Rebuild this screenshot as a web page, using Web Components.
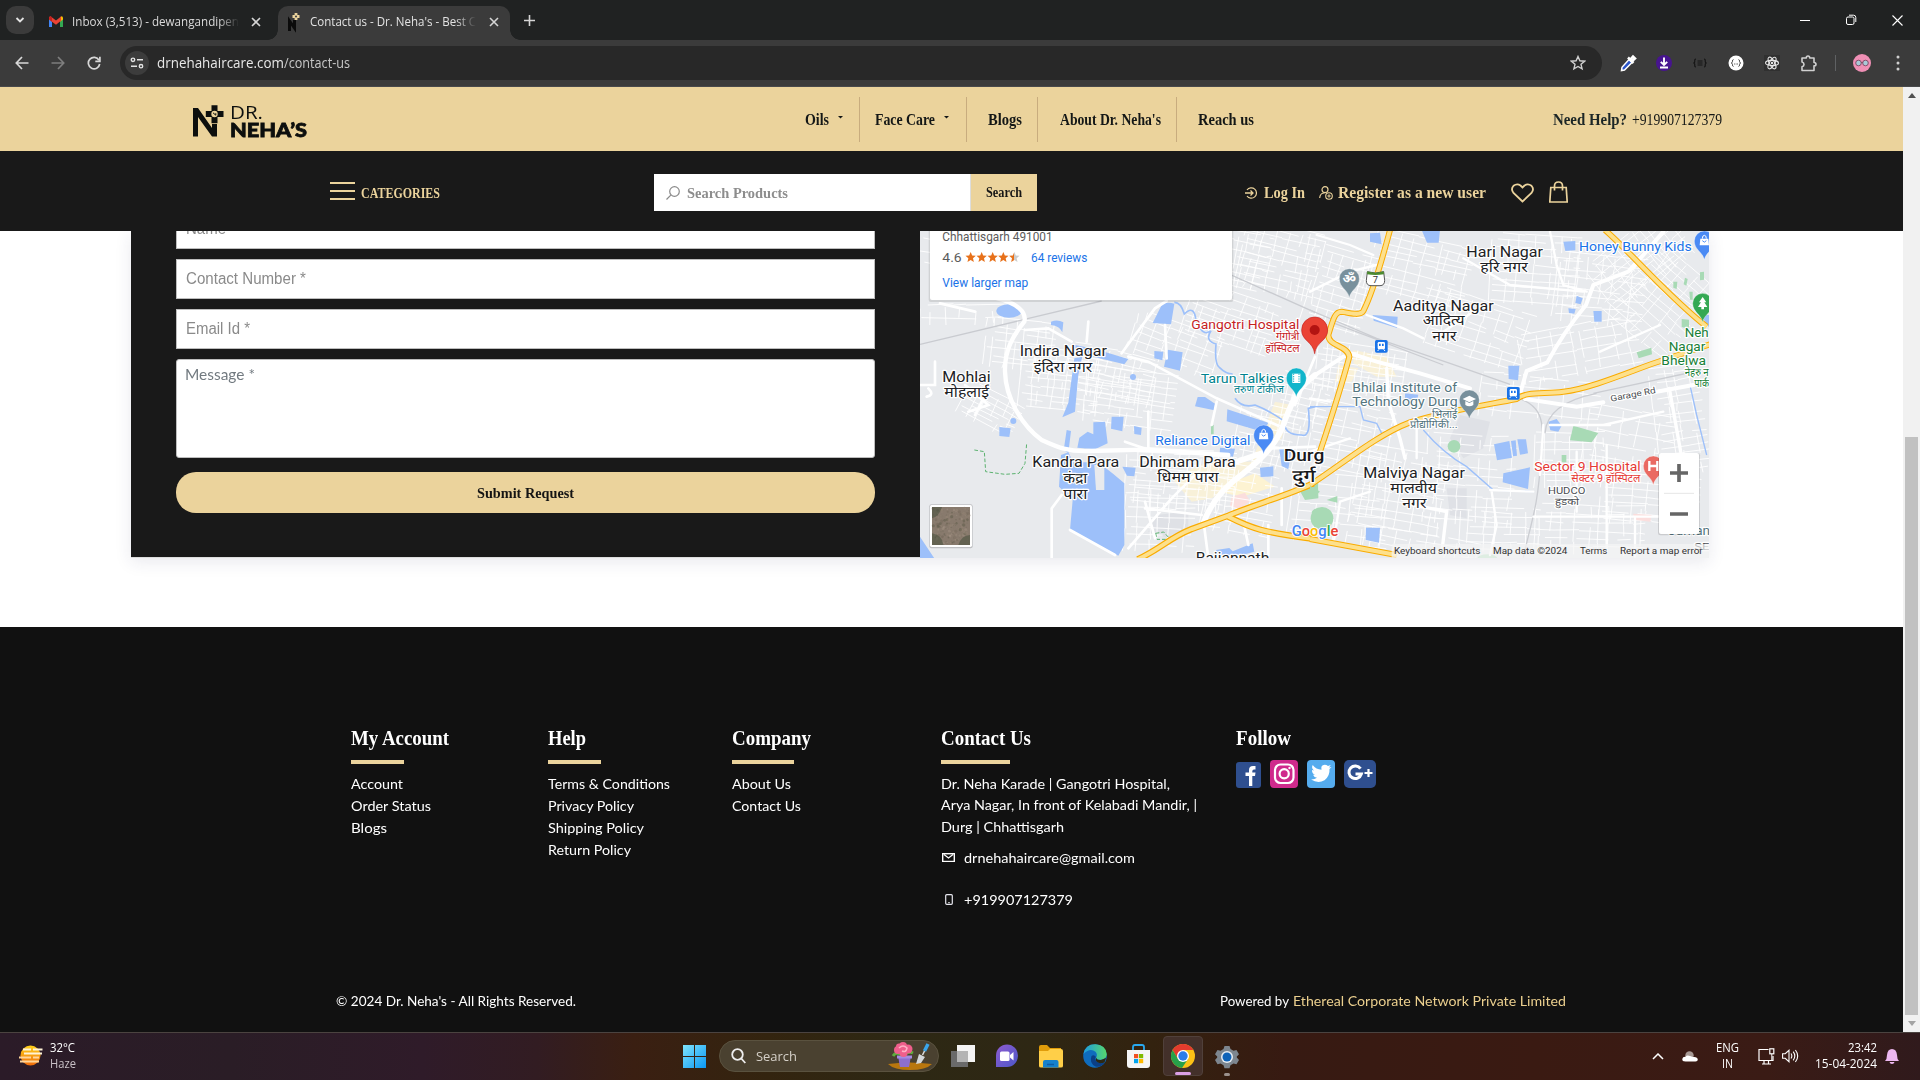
<!DOCTYPE html>
<html lang="en">
<head>
<meta charset="utf-8">
<title>Contact us - Dr. Neha's</title>
<style>
html,body{margin:0;padding:0;height:1080px;overflow:hidden;background:#fff}
</style>
</head>
<body>
<desktop-screen></desktop-screen>
<script>
const SANS = '"Open Sans","Noto Sans",sans-serif';
const SERIF = '"Liberation Serif",serif';
const LATO = 'Lato,"Open Sans",sans-serif';

function define(name, html, init) {
  customElements.define(name, class extends HTMLElement {
    constructor() {
      super();
      this.attachShadow({ mode: 'open' });
    }
    connectedCallback() {
      if (this.ready) return;
      this.ready = true;
      const t = document.createElement('template');
      t.innerHTML = typeof html === 'function' ? html(this) : html;
      this.shadowRoot.append(document.importNode(t.content, true));
      if (init) init(this);
    }
  });
}
const svg = (w, h, body, extra = '') => `<svg width="${w}" height="${h}" viewBox="0 0 ${w} ${h}" fill="none" ${extra}>${body}</svg>`;

/* A single line of text condensed or widened to a set width; m = space before it */
define('fit-text', el => `<style>
:host{display:block;flex:none;width:${el.getAttribute('w')}px;margin-left:${el.getAttribute('m') || 0}px;white-space:nowrap}
span{display:inline-block;transform-origin:0 50%}</style><span><slot></slot></span>`, el => {
  const s = el.shadowRoot.querySelector('span');
  const n = s.getBoundingClientRect().width;
  if (n) s.style.transform = `scaleX(${el.getAttribute('w') / n})`;
});

/* Fixed cell that centres an icon */
define('icon-cell', el => `<style>:host{display:flex;flex:none;align-items:center;justify-content:center;width:${el.getAttribute('w')}px;margin-left:${el.getAttribute('m') || 0}px}</style><slot></slot>`);

const closeX = svg(10, 10, '<path d="M1 1l8 8M9 1L1 9" stroke="#d5d5d5" stroke-width="1.6"/>');

define('browser-tabs', `<style>
:host{display:flex;height:40px;background:#202222;font:12px/20px ${SANS};color:#e3e3e3;align-items:center}
svg{display:block}
.menu{width:28px;height:28px;margin-left:6px;border-radius:10px;background:#3b3b3b;display:flex;align-items:center;justify-content:center}
.tab{display:flex;align-items:center;height:34px;align-self:flex-end;padding-bottom:2px;box-sizing:border-box}
.idle{width:229px;margin-left:15px;color:#dadada}
.active{width:232px;background:#3b3b3b;border-radius:10px 10px 0 0;margin-left:0;position:relative}
.active::before,.active::after{content:"";position:absolute;bottom:0;width:10px;height:10px}
.active::before{left:-10px;background:radial-gradient(circle at 0 0,transparent 9.5px,#3b3b3b 10px)}
.active::after{right:-10px;background:radial-gradient(circle at 100% 0,transparent 9.5px,#3b3b3b 10px)}
.fade{-webkit-mask:linear-gradient(90deg,#000 88%,transparent)}
.win{margin-left:auto;display:flex}
</style>
<div class="menu">${svg(10, 8, '<path d="M1.5 2l3.5 3.5L8.500 2" stroke="#e3e3e3" stroke-width="1.8"/>')}</div>
<div class="tab idle">
${svg(14, 12, '<path d="M0 1.500V11h3V5.500z" fill="#4285f4"/><path d="M14 1.500V11h-3V5.500z" fill="#34a853"/><path d="M11 5.700V1.300L12.500.2Q14 .3 14 2v1.500z" fill="#fbbc04"/><path d="M0 3.500V2Q0 .3 1.500.2L7 4.500 12 .6v4.200L7 8.800z" fill="#ea4335"/><path d="M0 3.500V2Q.3 0 2 .5l1 .8v4.400z" fill="#c5221f"/>', 'style="margin:0 9px 1px 0"')}
<fit-text class="fade" w="167">Inbox (3,513) - dewangandipen</fit-text>
<icon-cell w="10" m="12">${closeX}</icon-cell></div>
<div class="tab active">
${svg(16, 22, '<path d="M2.500 20V10l5 7V9" stroke="#0b0b0b" stroke-width="3"/><path d="M9 2v7M5.500 5.500h7" stroke="#ebd39c" stroke-width="2.800"/><circle cx="9" cy="5.500" r="1.100" fill="#444"/>', 'style="margin:0 6px 0 9px"')}
<fit-text class="fade" w="166" m="1">Contact us - Dr. Neha's - Best C</fit-text>
<icon-cell w="10" m="13">${closeX}</icon-cell></div>
<icon-cell w="12" m="13">${svg(11, 11, '<path d="M5.500 0v11M0 5.500h11" stroke="#d5d5d5" stroke-width="1.600"/>')}</icon-cell>
<div class="win">
<icon-cell w="46">${svg(10, 10, '<path d="M0 5.500h10" stroke="#fff"/>')}</icon-cell>
<icon-cell w="46">${svg(12, 12, '<rect x="1.500" y="3" width="7.500" height="7.500" rx="1.500" stroke="#fff"/><path d="M4 1.200h4.500q2.300 0 2.300 2.300V8" stroke="#fff"/>')}</icon-cell>
<icon-cell w="46">${svg(11, 11, '<path d="M.5.5l10 10M10.500.5l-10 10" stroke="#fff" stroke-width="1.100"/>')}</icon-cell>
</div>`);

define('browser-toolbar', `<style>
:host{display:flex;align-items:center;height:46px;background:#3b3b3b;border-bottom:1px solid #48494b;font:14px/20px ${SANS};color:#e8e8e8}
svg{display:block}
.omni{display:flex;align-items:center;width:1482px;height:34px;margin-left:11px;border-radius:17px;background:#282828}
.site{width:24px;height:24px;border-radius:50%;background:#3c3c3c;display:flex;align-items:center;justify-content:center;margin-left:5px}
.path{color:#c7c7c7}
.star{margin-left:auto;margin-right:16px}
.sep{width:1px;height:16px;background:#5f6163;margin:0 9px}
</style>
<icon-cell w="36" m="4">${svg(14, 14, '<path d="M13.500 7H1.500M7 1L1.300 7 7 13" stroke="#d8d8d8" stroke-width="1.700"/>')}</icon-cell>
<icon-cell w="36">${svg(14, 14, '<path d="M.5 7h12M7 1l5.700 6L7 13" stroke="#7e7e7e" stroke-width="1.700"/>')}</icon-cell>
<icon-cell w="33" m="1">${svg(14, 14, '<path d="M12 4.200A5.700 5.700 0 1 0 12.700 8" stroke="#d8d8d8" stroke-width="1.700"/><path d="M12.900.7v4.600H8.300" stroke="#d8d8d8" stroke-width="1.700"/>')}</icon-cell>
<div class="omni" style="margin-left:10px"><div class="site">${svg(14, 12, '<circle cx="3" cy="2.800" r="1.700" stroke="#e3e3e3" stroke-width="1.400"/><path d="M7 2.800h6M1 9.200h6" stroke="#e3e3e3" stroke-width="1.600"/><circle cx="11" cy="9.200" r="1.700" stroke="#e3e3e3" stroke-width="1.400"/>')}</div>
<fit-text w="127" m="8">drnehahaircare.com</fit-text><fit-text class="path" w="66">/contact-us</fit-text>
<div class="star">${svg(16, 16, '<path d="M8 1.500l1.900 4.300 4.700.4-3.600 3.100 1.100 4.600L8 11.500l-4.100 2.400L5 9.300 1.400 6.200l4.700-.4z" stroke="#d0d0d0" stroke-width="1.400"/>')}</div></div>
<icon-cell w="36" m="8">${svg(18, 18, '<path d="M10 5.500l3 3L5.500 16l-3 .5.500-3.200z" fill="#2b55c9" stroke="#fff" stroke-width="1.500"/><path d="M9 3.500l5.500 5.500M10.500 6.500l3.500-4 2 2-4 3.500" stroke="#fff" stroke-width="2.500"/>')}</icon-cell>
<icon-cell w="36">${svg(16, 16, '<circle cx="8" cy="8" r="8" fill="#47148f"/><path d="M8 2.500v6M4.800 6.800L8 10l3.200-3.200M4 12.500h8" stroke="#fff" stroke-width="1.900"/>')}</icon-cell>
<icon-cell w="36">${svg(14, 10, '<path d="M3 1Q1.500 1 1.800 3 2 4.700.5 5 2 5.300 1.800 7 1.500 9 3 9M11 1q1.500 0 1.200 2-.2 1.700 1.300 2-1.500.3-1.300 2Q12.500 9 11 9M4.500 3h5M4.500 5h5M4.500 7h5" stroke="#141414" stroke-width="1.200"/>')}</icon-cell>
<icon-cell w="36">${svg(16, 16, '<circle cx="8" cy="8" r="7.500" fill="#fff"/><path d="M5.500 4.500Q4.300 4.700 4.500 6.300 4.500 7.700 3.300 8q1.200.3 1.200 1.700-.2 1.600 1 1.800M10.500 4.500q1.200.2 1 1.800 0 1.400 1.200 1.700-1.200.3-1.200 1.700.200 1.600-1 1.800M6.200 9h.8M7.700 9h.8M9.200 9h.8" stroke="#333" stroke-width=".9"/>')}</icon-cell>
<icon-cell w="36">${svg(16, 16, '<rect width="16" height="16" fill="#303030"/><g stroke="#e6e6e6" stroke-width="1.100"><ellipse cx="8" cy="8" rx="6.500" ry="2.600"/><ellipse cx="8" cy="8" rx="6.500" ry="2.600" transform="rotate(60 8 8)"/><ellipse cx="8" cy="8" rx="6.500" ry="2.600" transform="rotate(120 8 8)"/></g><circle cx="8" cy="8" r="1.200" fill="#e6e6e6"/>')}</icon-cell>
<icon-cell w="36">${svg(17, 17, '<path d="M2 3h4.300q0-2 1.700-2t1.700 2H14v4.500q2 0 2 1.700t-2 1.700V15.500H2v-3.800q2-.5 2-2.300T2 7z" stroke="#d0d0d0" stroke-width="1.600" stroke-linejoin="round"/>')}</icon-cell>
<div class="sep"></div>
<icon-cell w="18" m="8">${svg(18, 18, '<circle cx="9" cy="9" r="9" fill="#ef8fb5"/><circle cx="5.500" cy="9" r="2.800" fill="#a9c9d8" stroke="#84506a"/><circle cx="12.500" cy="9" r="2.800" fill="#a9c9d8" stroke="#84506a"/><path d="M8 8.500h2" stroke="#84506a"/>')}</icon-cell>
<icon-cell w="4" m="25">${svg(4, 16, '<g fill="#d0d0d0"><circle cx="2" cy="2" r="1.500"/><circle cx="2" cy="8" r="1.500"/><circle cx="2" cy="14" r="1.500"/></g>')}</icon-cell>`);

define('brand-logo', `<style>
:host{display:flex;align-items:center;color:#0d0f0e;font-family:Lato,sans-serif}
svg{display:block}
.w{margin-left:6px;width:77px}
.a{font:400 19px/17px "Open Sans",sans-serif}
.b{font:900 19.500px/17px Lato,sans-serif;-webkit-text-stroke:.8px #0d0f0e}
</style>
${svg(31, 33, '<path d="M0 3h5l14 20v-4h5v12.500h-5L5 12v19.500H0z" fill="#0d0f0e"/><path d="M21.500.3v17.900M12.800 9h17.700" stroke="#0d0f0e" stroke-width="6"/><circle cx="21.500" cy="9" r="3.200" fill="#ebd39c"/><path d="M20 7.800l2.800 2.400v-2" stroke="#0d0f0e"/>')}
<div class="w"><fit-text class="a" w="33">DR.</fit-text><fit-text class="b" w="77">NEHA’S</fit-text></div>`);

define('site-header', `<style>
:host{display:flex;align-items:center;height:64px;background:#ebd39c;font:bold 16px/20px ${SERIF};color:#141716}
svg{display:block}
brand-logo{margin-left:193px;margin-top:4px}
nav{display:flex;align-items:center;margin-left:498px}
nav fit-text{padding-top:2px}
i{display:block;width:1px;height:45px;background:#c8ac7e}
.h{font-size:17px;color:#1c2626}.p{font-weight:400;font-size:16px}
.nh{display:flex;align-items:center;margin-left:299px;padding-top:1px}
</style>
<brand-logo></brand-logo>
<nav><fit-text w="24">Oils</fit-text><icon-cell w="6" m="8">${svg(5, 3, '<path d="M0 0h5L2.500 2.500z" fill="#141716"/>', 'style="margin-top:-3px"')}</icon-cell><i style="margin-left:16px"></i>
<fit-text w="60" m="15">Face Care</fit-text><icon-cell w="6" m="8">${svg(5, 3, '<path d="M0 0h5L2.500 2.500z" fill="#141716"/>', 'style="margin-top:-3px"')}</icon-cell><i style="margin-left:17px"></i>
<fit-text w="34" m="21">Blogs</fit-text><i style="margin-left:15px"></i>
<fit-text w="101" m="22">About Dr. Neha's</fit-text><i style="margin-left:15px"></i>
<fit-text w="56" m="21">Reach us</fit-text></nav>
<div class="nh"><fit-text class="h" w="74">Need Help?</fit-text><fit-text class="p" w="90" m="5">+919907127379</fit-text></div>`);

define('site-bar', `<style>
:host{display:flex;align-items:center;height:80px;background:#191919;font:bold 17px/20px ${SERIF};color:#ebd39c;padding-top:3px;box-sizing:border-box}
svg{display:block}
.c{font-size:15px;padding-top:1px}
.s{display:flex;width:383px;height:37px;margin-left:214px;margin-top:0}
.in{display:flex;align-items:center;width:317px;background:#fff;color:#8d8d8d;font-size:15px;border-right:1px solid #ddd;box-sizing:border-box}
.go{display:flex;align-items:center;justify-content:center;width:66px;background:#ebd39c;color:#161616;font-size:14px}
</style>
<icon-cell w="25" m="330">${svg(25, 18, '<path d="M0 1h25M0 9h25M0 17h25" stroke="#ebd39c" stroke-width="2"/>', 'style="margin-top:-3px"')}</icon-cell>
<fit-text class="c" w="79" m="6">CATEGORIES</fit-text>
<div class="s"><div class="in"><icon-cell w="14" m="12">${svg(14, 14, '<circle cx="8.500" cy="5.500" r="4.800" stroke="#8a8a8a" stroke-width="1.200"/><path d="M4.800 9.200L.5 13.500" stroke="#8a8a8a" stroke-width="1.200"/>')}</icon-cell><fit-text w="101" m="7">Search Products</fit-text></div><div class="go"><fit-text w="36">Search</fit-text></div></div>
<icon-cell w="12" m="208">${svg(12, 12, '<path d="M2 3a5.200 5.200 0 1 1 0 6" stroke="#ebd39c" stroke-width="1.200"/><path d="M0 6h8M5.500 3.500L8 6 5.500 8.500" stroke="#ebd39c" stroke-width="1.300"/>')}</icon-cell>
<fit-text w="41" m="7">Log In</fit-text>
<icon-cell w="14" m="14">${svg(14, 14, '<circle cx="6" cy="3.700" r="3" stroke="#ebd39c" stroke-width="1.200"/><path d="M.7 12Q1 7 5.500 7" stroke="#ebd39c" stroke-width="1.200"/><circle cx="10" cy="10" r="3.300" stroke="#ebd39c" stroke-width="1.100"/><path d="M10 8.300v3.400M8.300 10h3.400" stroke="#ebd39c"/>')}</icon-cell>
<fit-text w="148" m="5">Register as a new user</fit-text>
<icon-cell w="23" m="25">${svg(23, 20, '<path d="M11.500 18.500L2.500 10Q-.5 6 2.500 2.800 6 .2 9.500 2.500L11.500 4.500 13.500 2.500Q17 .2 20.500 2.800 23.500 6 20.500 10z" stroke="#ebd39c" stroke-width="1.800"/>')}</icon-cell>
<icon-cell w="19" m="15">${svg(19, 22, '<path d="M1.800 6.500h15.400l1 14.500H.8z" stroke="#ebd39c" stroke-width="1.700"/><path d="M5.500 9.500V5q0-4 4-4t4 4v4.500" stroke="#ebd39c" stroke-width="1.700"/>', 'style="margin-top:-2px"')}</icon-cell>`);

define('form-field', `<style>
:host{display:flex;box-sizing:border-box;height:40px;border:1px solid #bdbdbd;background:#fff;align-items:center;padding-left:9px;font:16px/20px "Liberation Sans",sans-serif;color:#8a8a8a}
:host([area]){height:99px;border-radius:3px;align-items:flex-start;padding:4px 0 0 8px;font:16px/20px ${LATO};color:#727a80}
</style><slot></slot>`);

define('contact-form', `<style>
:host{display:block;box-sizing:border-box;width:789px;height:326px;background:#191919;padding:0 45px;overflow:hidden}
.f{display:flex;flex-direction:column;gap:10px;margin-top:-22px}
.go{display:flex;align-items:center;justify-content:center;height:41px;border-radius:20px;background:#ebd39c;color:#141414;font:bold 15px/20px ${SERIF};margin-top:4px}
</style><div class="f">
<form-field><fit-text w="40">Name</fit-text></form-field>
<form-field><fit-text w="120">Contact Number *</fit-text></form-field>
<form-field><fit-text w="64">Email Id *</fit-text></form-field>
<form-field area><fit-text w="70">Message *</fit-text></form-field>
<div class="go"><fit-text w="97">Submit Request</fit-text></div></div>`);

/* ---------- map ---------- */
function seeded(s) { return () => (s = (s * 16807) % 2147483647) / 2147483647; }
function streets() {
  const r = seeded(4211);
  const zones = [ // cx, cy, half width, half height, angle, spacing (px of the map)
    [1215, 255, 55, 28, 12, 8], [1280, 260, 40, 35, 14, 7], [1110, 262, 60, 12, 5, 14],
    [965, 315, 45, 10, 0, 12], [1020, 345, 35, 25, 6, 8], [1060, 380, 40, 30, 6, 7], [1110, 375, 45, 25, 12, 8],
    [1130, 400, 45, 30, 8, 8], [1175, 345, 45, 22, 20, 9], [1230, 320, 45, 28, 18, 8], [990, 410, 30, 18, 28, 7],
    [1180, 480, 55, 30, 4, 8], [1160, 520, 35, 32, 2, 9], [1240, 500, 35, 35, 10, 9], [1270, 440, 35, 28, 12, 8],
    [1300, 400, 28, 25, 14, 8], [1340, 290, 30, 40, 16, 8], [1360, 370, 45, 25, 8, 7], [1420, 270, 50, 32, 14, 9],
    [1480, 330, 50, 30, 18, 10], [1535, 270, 45, 35, 4, 9], [1600, 290, 45, 35, 6, 10], [1580, 350, 60, 25, -10, 11],
    [1660, 300, 40, 45, 40, 9], [1640, 260, 50, 28, -38, 8], [1350, 440, 40, 35, 12, 9], [1400, 490, 45, 40, 10, 10],
    [1340, 510, 50, 35, 6, 10], [1470, 480, 45, 45, 4, 12], [1500, 530, 40, 22, 2, 9], [1590, 530, 55, 25, 2, 9],
    [1570, 460, 35, 28, 0, 9], [1630, 440, 45, 30, 10, 12], [1680, 420, 25, 55, -8, 10], [1650, 500, 50, 25, 4, 11],
    [1420, 545, 60, 12, 10, 9], [1540, 400, 60, 22, 6, 16], [940, 255, 25, 14, 10, 13]];
  let d = '';
  for (const [cx, cy, w, h, a, s] of zones) {
    const c = Math.cos(a * Math.PI / 180), n = Math.sin(a * Math.PI / 180);
    const P = (x, y) => (cx + x * c - y * n).toFixed(1) + ' ' + (cy + x * n + y * c).toFixed(1);
    for (let y = -h; y < h; y += s * (.6 + r() * .6)) {
      let x = -w + r() * 12;
      while (x < w - 4) { const e = Math.min(w, x + 12 + r() * 45); d += `M${P(x, y)}L${P(e, y + (r() - .5) * 3)}`; x = e + (r() < .4 ? 9 : 0); }
    }
    for (let x = -w; x < w; x += s * (.8 + r() * 1.1)) {
      let y = -h + r() * 8;
      while (y < h - 4) { const e = Math.min(h, y + 8 + r() * 26); d += `M${P(x, y)}L${P(x + (r() - .5) * 3, e)}`; y = e + (r() < .45 ? 9 : 0); }
    }
  }
  return d;
}
function ground() {
  const r = seeded(99); let o = '';
  for (let i = 0; i < 200; i++) o += `<circle cx="${(54 + r() * 108).toFixed(0)}" cy="${(849 + r() * 108).toFixed(0)}" r="${(1 + r() * 4).toFixed(1)}" fill="${['#75695c', '#958576', '#a19284', '#5b5a48', '#8c7d70'][i % 5]}" opacity=".5"/>`;
  return o + '<path d="M51 846h30q-10 30-30 34zM51 925q30 5 35 35h-35zM130 960q10-30 35-30v30z" fill="#4b5140" opacity=".6"/>';
}
const A = s => `<g transform="translate(915 225) scale(.333333)">${s}</g>`;
const B = s => `<g transform="translate(1310 225) scale(.333333)">${s}</g>`;
const T = (x, y, w, size, t, cls = 'k', anchor = 'start') => `<text x="${x}" y="${y}" font-size="${size}" class="${cls}" text-anchor="${anchor}" ${w ? `textLength="${w}" lengthAdjust="spacingAndGlyphs"` : ''}>${t}</text>`;
const pin = (x, y, c, g = '', s = 1) => `<g transform="translate(${x} ${y}) scale(${s})"><path d="M0 0C-4-24-30-30-30-57A30 30 0 1 1 30-57C30-30 4-24 0 0z" fill="${c}" stroke="#fff" stroke-opacity=".5" stroke-width="2"/>${g}</g>`;
const bag = '<path d="M-12-64h24l2 20h-28z" fill="#fff"/><path d="M-6-64q0-10 6-10t6 10" stroke="#fff" stroke-width="3" fill="none"/><path d="M-6-58q6 9 12 0" stroke="#4a8af4" stroke-width="3" fill="none"/>';
const train = (x, y) => `<g transform="translate(${x} ${y})"><rect x="-19" y="-19" width="38" height="38" rx="5" fill="#1a73e8"/><rect x="-11" y="-13" width="22" height="22" rx="4" fill="#fff"/><path d="M-7-8h5v7h-5zM2-8h5v7H2z" fill="#1a73e8"/><path d="M-7 9l-4 5M7 9l4 5" stroke="#fff" stroke-width="3"/></g>`;
const hwA = 'M668 1003C740 970 760 940 830 912L940 872C1010 842 1120 810 1195 775M940 875C1010 910 1040 922 1200 942';
const hwB = 'M240 15C220 90 190 200 160 258C150 275 110 262 95 260C75 260 70 280 55 330C55 365 112 360 118 395C90 500 60 590 30 680M0 780C100 715 200 630 300 592C400 560 500 545 620 522C650 498 700 508 760 500C850 490 980 430 1060 405L1200 358M885 15C960 80 1080 220 1190 305M0 942L260 990';
const star = (x, f) => `<path transform="translate(${x} 96)" d="M0-15l4.500 10.500 11 1-8.500 7.500 2.500 11L0 9l-9.500 6 2.500-11-8.500-7.500 11-1z" fill="${f}"/>`;

define('area-map', `<style>
:host{display:block;width:789px;height:327px}
svg{display:block}
text{font-family:Roboto,"Noto Sans Devanagari","Noto Sans",sans-serif}
.k,.r,.t,.b,.g,.s,.x,.m{paint-order:stroke;stroke:#fff;stroke-width:7;stroke-linejoin:round}
.k{fill:#202124}.x{fill:#17181a;font-weight:500}.r{fill:#c5221f}.t{fill:#00838f}.b{fill:#1a73e8}.g{fill:#188038}.s{fill:#547580}.m{fill:#4a4d52}
.q{fill:#e53935;paint-order:stroke;stroke:#fff;stroke-width:7}
.w{fill:#9dc0fa}.p{fill:#a8dab5}.n{fill:#333}.lk{fill:#1a73e8}.gr{fill:#5b5b5b}
</style>
<svg width="789" height="327" viewBox="920 231 789 327" fill="none">
<defs><linearGradient id="hs"><stop offset=".5" stop-color="#e7711b"/><stop offset=".5" stop-color="#ccc"/></linearGradient></defs>
<rect x="920" y="231" width="789" height="327" fill="#e8eaed"/>
${A('<g fill="#fdf3d2"><path d="M1080 530l50 10-30 100-60 60-60 60-90 60-60 10-60-70 110-50 130 0z" opacity=".75"/><path d="M1020 745l60 40-100 30-90-20z"/></g><path d="M950 815l40-12 15 25-30 25-30-10z" fill="#fbdedd"/><path d="M720 870l100-10 0 50-60 30-60-20z" fill="#dfe1e6"/>')}
${B('<g fill="#fdf3d2"><path d="M130 375l100 20 30 60-60 0-70-40zM85 420l60 10-20 40-50 0z" opacity=".8"/></g><path d="M450 570l90 20-20 80-60 30-40-60zM410 790l60 0 0 90-50-10z" fill="#dfe1e6"/>')}
<path d="${streets()}" stroke="#fff" stroke-width="1" stroke-opacity=".9"/>
${A(`<g class="w"><ellipse cx="282" cy="258" rx="38" ry="20"/><path d="M408 290q20-8 37 2l-3 30q-8-20-34-22z"/><path d="M742 236q20-6 36 0l-10 62-55-4z"/><path d="M480 360l60 12 100 30-12 16-90-22-60-22z"/><path d="M478 400l24-5-12 55-10 110-38 17 18-44z"/><path d="M718 378l27 2-3 26-24-6zM758 374l45 8-8 55-48-12z"/><circle cx="654" cy="456" r="9"/><path d="M848 516l22 0 30 20-2 20-58-12z"/><path d="M937 553l123 40-15 28-110-32z"/><path d="M590 575h36l-4 44-34-8zM657 603l23 5-2 22-20-3zM455 615l13 3-8 66-14-8z"/><path d="M535 592l35-2 8 65-38 18-53-5 6-30 25-18 17 8z"/><path d="M438 690l22-8 15 30 75 0 45 35 33 28 0 185-18 32-145-77 8-90-41-40z"/><path d="M915 668l45 3-6 24-40-5zM622 725l40 3-4 26-22-2zM903 975l40-6 10 10 60-24 5 25-45 12-68-4zM15 935l45 68H15zM253 606l34 4-4 26-30-3zM1092 665l38 8-10 60-20-10z"/><circle cx="295" cy="588" r="9"/><path d="M1035 728l40-4 0 30-38 2z"/></g>
<path d="M538 720l30 0 0 75-25 0z" fill="#e8eaed"/>
<path d="M778 232q20 0 30 35 30-30 35 20 20 50 45 30-20 30 15 40-5 60 10 70 20 20 40 20M960 520q20 30 60 20 40 15 90 50M1110 590q-5 40 50 40 30 10 20-80l20-5" stroke="#9dc0fa" stroke-width="5"/>
<path d="M178 675l30 5 4 60 58 8 42-3 18-30 5-60M722 925l24-4 20 22-40 0z" stroke="#5bb26f" stroke-width="3" stroke-dasharray="11 6"/>
<path class="p" d="M1150 790l60-20v50l-40 5zM1190 860q20-20 25 0v50q-20-10-25-50zM888 600h8v28h-8z"/>
<path d="M15 358L560 228M915 135L1200 262" stroke="#c9cbd0" stroke-width="4"/>
<g stroke="#fff" stroke-linecap="round"><path stroke-width="13" d="M240 218C310 235 335 262 328 290C295 330 268 375 270 440C272 520 320 600 380 645C430 668 460 680 520 678L690 674 940 690"/><path stroke-width="17" d="M1200 450C1150 490 1140 510 1112 580C1090 650 1050 695 985 745C920 790 885 840 866 893M950 715L1048 682"/>
<path stroke-width="8" d="M330 315L400 310 470 350M620 385L660 330 720 250 755 228M640 395L700 410 905 520 1090 602M1200 395L1140 540M520 290L515 350M750 300L755 400M905 530L890 600M410 1000L410 850 440 810M465 915L600 990M640 970L770 820 850 740M866 893L880 1000M700 675L700 560M690 850L860 870M700 674L630 650M75 235L180 260M15 480H60V410M40 490q20 20-5 25M150 480L220 540 160 560M200 530L180 570M720 940L690 830M1060 900V990M985 890L1000 960M1100 790V900M1070 670L1200 665"/></g>
<path d="${hwA}" stroke="#f9ab00" stroke-width="19"/><path d="${hwA}" stroke="#fde08c" stroke-width="12"/>`)}
${B(`<g class="w"><path d="M180 25l30-2 5 35-35-8zM335 15h55l-4 38-35 0zM760 50l36-2 0 28-30 2zM188 270l75 5-2 34-70-22zM595 422l33 0-4 44-28-4zM800 212l18 8-6 18-16-4zM775 250l22 2-4 14-16-2zM850 258l25 0 0 32-22 0zM715 590l25-8 15 20-10 18-24-4zM552 658l46-10 8 50-45 8zM603 648l14-2 4 46-12 2zM622 643l26 0 6 42-24 4zM580 745l80-18-6 65-76-20zM168 908l42 0-3 45-40-8zM285 505l40 4-4 16-36 0zM1172 270l26 0v38z"/></g>
<path d="M0 545l150 0 10 40 40 10 20 40M340 615q60 70 130 110l80 70 120 5M1140 480l20 90 30 120" stroke="#9dc0fa" stroke-width="4"/>
<g class="p"><path d="M790 602l75 22-20 28-65-6zM980 382l44-14 2 20-40 12zM1090 170l12 0-2 22-10-4zM1125 158l8 4-4 20-8-4zM1170 142l12-2 0 24-12 2zM1138 200l10 0 0 24-8 0zM1115 282l22 2 0 28-22-6zM0 780l30 20-30 22zM50 825l32-12 0 20z"/><circle cx="36" cy="880" r="34"/><circle cx="432" cy="664" r="19"/><ellipse cx="532" cy="1000" rx="30" ry="12"/><path d="M755 690h14v22h-14z"/></g>
<path d="M970 866l55 4-4 20-50-6z" fill="#fbdedd"/>
<path d="M0 255L200 340 420 415 600 478M60 290L400 420M600 510C700 540 705 580 692 700C685 850 660 900 640 998M850 505L1200 430M860 505q-150 30-155 120" stroke="#cbcdd2" stroke-width="4"/>
<g stroke="#fff" stroke-linecap="round"><path stroke-width="12" d="M1060 20L1000 90 955 140 850 180 828 240C770 310 740 360 712 412L650 438 632 500 645 522 800 545 880 532M1040 500L1150 480M120 385L200 410 330 445 480 490M0 460L100 395"/>
<path stroke-width="10" d="M230 430L235 530 270 640 285 700M1078 490L1112 680M285 835L410 860 395 985"/>
<path stroke-width="7" d="M170 270L280 310 340 340M0 200L120 140 200 120M880 600L1060 560M720 600L900 600M540 795L670 800M670 875H1050M720 20L740 120 760 180 830 200M460 100L600 180 820 200M400 320L520 240M690 750L700 600M800 680V860M890 660V980M975 880V995M545 800L560 900 540 990M70 960L90 830 180 800M20 30L120 60 190 90M0 520L60 530M0 680L120 640M320 600L320 700M870 380L1050 300"/></g>
<path d="${hwB}" stroke="#f9ab00" stroke-width="18"/><path d="${hwB}" stroke="#fde08c" stroke-width="12"/>`)}
${B(pin(118, 218, '#78909c', T(0, -44, 0, 40, 'ॐ', 'om', 'middle').replace('class="om"', 'fill="#fff" font-weight="700"')) +
`<path d="M172 140Q196 148 221 140L224 166Q224 182 210 182H183Q169 182 169 166z" fill="#fff" stroke="#555" stroke-width="3"/><path d="M172 139Q196 147 221 139L222 148Q196 152 171 148z" fill="#4b8b2f"/>` + T(196, 174, 0, 28, '7', 'n', 'middle') +
train(214, 364) + train(610, 505) + pin(478, 582, '#78909c', '<path d="M-20-60L0-70 20-60 0-50z" fill="#fff"/><path d="M-12-54v12q12 8 24 0v-12L0-48z" fill="#fff"/>') +
pin(1030, 780, '#ea6a62', '<path d="M-12-72v30M12-72v30M-12-57h24" stroke="#fff" stroke-width="7"/>') + pin(1183, 105, '#4a8af4', bag) +
pin(1178, 292, '#34a853', '<path d="M0-76l11 16h-6l9 14H4v7h-8v-7h-10l9-14h-6z" fill="#fff"/>') +
`<path d="M14 386C10 350-25 348-25 315A39 39 0 0 1 53 315C53 348 18 350 14 386z" fill="#ea4335" stroke="#c5221f" stroke-width="2"/><circle cx="14" cy="315" r="15" fill="#b31412"/>` +
T(469, 97, 230, 44, 'Hari Nagar') + T(511, 141, 142, 42, 'हरि नगर') + T(249, 257, 302, 44, 'Aaditya Nagar') + T(338, 300, 126, 42, 'आदित्य') + T(367, 349, 72, 42, 'नगर') +
T(807, 79, 338, 40, 'Honey Bunny Kids', 'b') + T(1124, 336, 72, 40, 'Neh', 'g') + T(1076, 378, 110, 40, 'Nagar', 'g') + T(1054, 420, 134, 40, 'Bhelwa', 'g') + T(1124, 454, 72, 32, 'नेहरु न', 'g') + T(1153, 486, 44, 32, 'पार्क', 'g') +
T(127, 501, 314, 40, 'Bhilai Institute of', 's') + T(127, 543, 316, 40, 'Technology Durg', 's') + T(366, 578, 76, 32, 'भिलाई', 's') + T(300, 610, 143, 32, 'प्रौद्योगिकी...', 's') +
T(160, 759, 305, 44, 'Malviya Nagar') + T(241, 803, 140, 42, 'मालवीय') + T(277, 850, 72, 42, 'नगर') +
T(673, 738, 319, 40, 'Sector 9 Hospital', 'q') + T(784, 770, 207, 32, 'सेक्टर 9 हॉस्पिटल', 'q') + T(714, 807, 112, 29, 'HUDCO', 'm') + T(735, 839, 72, 30, 'हुडको', 'm') +
`<g transform="rotate(-11 903 530)">${T(903, 530, 138, 26, 'Garage Rd', 'm')}</g>` + T(1075, 930, 125, 36, 'Juman', 's') + T(1153, 975, 45, 28, 'SE', 'm'))}
${A(pin(1144, 516, '#12b5cb', '<path d="M-12-70h24v28h-24z" fill="#fff"/><path d="M-8-70v28M8-70v28" stroke="#12b5cb" stroke-width="3" stroke-dasharray="4 3"/>') + pin(1046, 687, '#4a8af4', bag) +
T(314, 394, 262, 44, 'Indira Nagar') + T(356, 441, 176, 42, 'इंदिरा नगर') + T(82, 470, 145, 44, 'Mohlai') + T(88, 515, 134, 42, 'मोहलाई') +
T(352, 727, 261, 44, 'Kandra Para') + T(445, 773, 72, 42, 'कंद्रा') + T(445, 821, 72, 42, 'पारा') + T(673, 725, 289, 44, 'Dhimam Para') + T(727, 770, 184, 42, 'धिमम पारा') +
T(829, 312, 324, 41, 'Gangotri Hospital', 'r') + T(1083, 346, 70, 32, 'गंगोत्री', 'r') + T(1051, 381, 103, 32, 'हॉस्पिटल', 'r') + T(857, 474, 250, 41, 'Tarun Talkies', 't') + T(957, 504, 150, 32, 'तरुण टॉकीज', 't') +
T(721, 660, 285, 41, 'Reliance Digital', 'b') + T(1106, 708, 122, 52, 'Durg', 'x') + T(1132, 770, 70, 52, 'दुर्ग', 'x') + T(842, 1013, 221, 42, 'Baijannath') +
`<text x="1130" y="932" font-size="43" font-weight="500" textLength="140" lengthAdjust="spacingAndGlyphs" style="paint-order:stroke;stroke:#fff;stroke-width:5"><tspan fill="#4285f4">G</tspan><tspan fill="#ea4335">o</tspan><tspan fill="#fbbc04">o</tspan><tspan fill="#4285f4">g</tspan><tspan fill="#34a853">l</tspan><tspan fill="#ea4335">e</tspan></text>
<rect x="43" y="838" width="130" height="132" rx="6" fill="#000" opacity=".18"/><rect x="45" y="840" width="126" height="126" rx="5" fill="#fff"/><rect x="51" y="846" width="114" height="114" fill="#887a6d"/>${ground()}
<path d="M41 0H955V224q0 7-6 7H47q-6 0-6-7z" fill="#000" opacity=".1"/><path d="M45 0H951V219q0 6-6 6H51q-6 0-6-6z" fill="#fff"/>` +
T(82, 48, 331, 37, 'Chhattisgarh 491001', 'gr') + T(82, 111, 58, 40, '4.6', 'gr') + star(167, '#e7711b') + star(200, '#e7711b') + star(233, '#e7711b') + star(265, '#e7711b') + star(298, 'url(#hs)') +
T(348, 110, 169, 37, '64 reviews', 'lk') + T(82, 186, 258, 37, 'View larger map', 'lk'))}
${B(`<path d="M245 957H1200V1000H245z" fill="#f5f5f5" opacity=".7"/>` + T(252, 987, 259, 28, 'Keyboard shortcuts', 'n') + T(549, 987, 223, 28, 'Map data ©2024', 'n') + T(810, 987, 82, 28, 'Terms', 'n') + T(930, 987, 248, 28, 'Report a map error', 'n') +
`<rect x="1044" y="684" width="126" height="247" rx="7" fill="#000" opacity=".13"/><rect x="1047" y="684" width="120" height="243" rx="6" fill="#fff"/><path d="M1062 805h90" stroke="#e6e6e6" stroke-width="3"/><path d="M1080 744h54M1107 717v54M1080 867h54" stroke="#666" stroke-width="11"/>`)}
</svg>`);

define('contact-section', `<style>
:host{display:block;height:396px;background:#fff;overflow:hidden}
.card{display:flex;align-items:flex-start;width:1578px;height:327px;margin-left:131px;box-shadow:0 4px 16px rgba(40,40,90,.1);background:#ddd}
</style><div class="card"><contact-form></contact-form><area-map></area-map></div>`);

define('footer-column', el => `<style>
:host{display:block;flex:none;width:${el.getAttribute('col')}px;font:14px/22px ${LATO};color:#fff}
.h{font:bold 21px/26px ${SERIF};padding-top:1px}
i{display:block;height:4px;width:${el.getAttribute('bar')}px;background:#ebd39c;margin:9px 0 9px}
</style><fit-text class="h" w="${el.getAttribute('hw')}">${el.getAttribute('label')}</fit-text>${el.getAttribute('bar') ? '<i></i>' : ''}<slot></slot>`);

define('site-footer', `<style>
:host{display:flex;flex-direction:column;justify-content:space-between;box-sizing:border-box;height:405px;background:#111;padding:97px 0 20px;font:14px/22px ${LATO};color:#fff}
svg{display:block}
.cols{display:flex;margin-left:351px;height:240px}
.adr{line-height:21.300px}
.row{display:flex;align-items:center;height:22px;margin-top:10px}
.row+.row{margin-top:20px}
.soc{display:flex;align-items:flex-end;margin-top:9px}
.base{display:flex}
.g{color:#ebcf8e}
</style>
<div class="cols">
<footer-column label="My Account" hw="98" bar="53" col="197"><fit-text w="52">Account</fit-text><fit-text w="80">Order Status</fit-text><fit-text w="36">Blogs</fit-text></footer-column>
<footer-column label="Help" hw="38" bar="53" col="184"><fit-text w="122">Terms &amp; Conditions</fit-text><fit-text w="86">Privacy Policy</fit-text><fit-text w="96">Shipping Policy</fit-text><fit-text w="83">Return Policy</fit-text></footer-column>
<footer-column label="Company" hw="79" bar="62" col="209"><fit-text w="59">About Us</fit-text><fit-text w="69">Contact Us</fit-text></footer-column>
<footer-column label="Contact Us" hw="90" bar="69" col="295"><div class="adr"><fit-text w="229">Dr. Neha Karade | Gangotri Hospital,</fit-text><fit-text w="256">Arya Nagar, In front of Kelabadi Mandir, |</fit-text><fit-text w="123">Durg | Chhattisgarh</fit-text></div>
<div class="row"><icon-cell w="13" m="1">${svg(13, 9, '<rect x=".7" y=".7" width="11.600" height="7.800" stroke="#fff" stroke-width="1.400"/><path d="M2 1.500l4.500 3.500L11 1.500" stroke="#fff" stroke-width="1.200"/>')}</icon-cell><fit-text w="171" m="9">drnehahaircare@gmail.com</fit-text></div>
<div class="row"><icon-cell w="8" m="4">${svg(8, 11, '<rect x=".7" y=".7" width="6.600" height="9.600" rx="1" stroke="#e6e6ee" stroke-width="1.200"/><path d="M3.200 8.700h1.600" stroke="#fff"/>')}</icon-cell><fit-text w="109" m="11">+919907127379</fit-text></div></footer-column>
<footer-column label="Follow" hw="55" col="200"><div class="soc">
${svg(25, 26, '<rect width="25" height="26" rx="3" fill="#2f4f8f"/><path d="M13 24V14h-3.500v-3.500H13V8q0-4 4-4h2.500v3.500H18q-1.700 0-1.700 1.700v1.300h3.200L19 14h-2.700v10z" fill="#fff"/>')}
${svg(28, 28, '<rect width="28" height="28" rx="4" fill="#cf2a8c"/><rect x="5" y="4.500" width="18.500" height="18.500" rx="5.500" stroke="#fff" stroke-width="2.200"/><circle cx="14.200" cy="13.800" r="4.600" stroke="#fff" stroke-width="2.200"/><circle cx="19.500" cy="8" r="1.200" fill="#fff"/>', 'style="margin-left:9px"')}
${svg(28, 28, '<rect width="28" height="28" rx="4" fill="#55acee"/><path d="M4 19.500q3.500.2 6-1.800-3-.3-4-3h2Q4.800 13.500 5 10l2 .5Q4 8 5.700 5 9 9.500 14.500 9.700 13.500 5 17.700 4.800 19.500 4.800 21 6l2.800-1-1.800 2.500L24.500 7 22.500 9q.5 7-5 11.300Q11 24 4 19.500z" fill="#fff"/>', 'style="margin-left:9px"')}
${svg(32, 28, '<rect width="32" height="28" rx="5" fill="#2f4f8f"/><path d="M16.500 8.700A6.300 6.300 0 1 0 17.300 14H11.500" stroke="#fff" stroke-width="3"/><path d="M24.500 9v8M20.500 13h8" stroke="#fff" stroke-width="2.200"/>', 'style="margin-left:9px"')}
</div></footer-column>
</div>
<div class="base"><fit-text w="240" m="336">© 2024 Dr. Neha's - All Rights Reserved.</fit-text><fit-text w="69" m="644">Powered by</fit-text><fit-text class="g" w="273" m="4">Ethereal Corporate Network Private Limited</fit-text></div>`);

define('page-scrollbar', `<style>
:host{display:flex;flex-direction:column;width:17px;height:945px;background:#f1f1f1;align-items:center}
.up,.dn{height:17px;display:flex;align-items:center}
.th{width:13px;height:578px;background:#c1c1c1;margin-top:333px}
</style><div class="up">${svg(8, 5, '<path d="M0 5h8L4 0z" fill="#505050"/>')}</div><div class="th"></div><div class="dn">${svg(8, 5, '<path d="M0 0h8L4 5z" fill="#a3a3a3"/>')}</div>`);

define('task-bar', `<style>
:host{display:flex;box-sizing:border-box;height:48px;border-top:1px solid #4b4340;padding-bottom:1px;align-items:center;font:12px/16px ${SANS};color:#fff;background:linear-gradient(90deg,#2b1b28 0,#2a1d26 12%,#2f1b29 22%,#321c22 28%,#3a1f12 33%,#33240f 40%,#2d2814 47%,#2e2714 54%,#33220f 60%,#371a12 67%,#3a1a12 80%,#3a1b15 92%,#301a1c 100%)}
svg{display:block}
.l2{display:flex;flex-direction:column}
.hz{color:#c8c0c6}
.pill{display:flex;align-items:center;box-sizing:border-box;width:220px;height:32px;border-radius:16px;background:#4a4130;border:1px solid #5a523f;margin-left:13px;font-size:13.500px;color:#d5d0c8}
.cur{display:flex;flex-direction:column;align-items:center;box-sizing:border-box;width:40px;height:40px;border-radius:4px;background:#43302a;border:1px solid #50403a;margin-left:13px;padding-top:7px}
.cur b{width:16px;height:3px;border-radius:2px;background:#dba0e6;margin-top:4px}
.set{display:flex;flex-direction:column;align-items:center;margin-left:12px;padding-top:8px}
.set b{width:6px;height:3px;border-radius:2px;background:#9b918d;margin-top:4px}
.e{align-items:flex-end}
</style>
<icon-cell w="24" m="19">${svg(24, 22, '<defs><linearGradient id="a" x2="0" y2="1"><stop stop-color="#ffd21a"/><stop offset="1" stop-color="#ef6a0a"/></linearGradient></defs><circle cx="11.500" cy="10.500" r="10" fill="url(#a)"/><path d="M4 4.500h8M14 4.500h9.500M5 8.500h18" stroke="#fff3d5" stroke-width="1.900"/><path d="M0 12.500h12M14 12.500h6M1 16.500h19" stroke="#ffd59a" stroke-width="1.900"/>')}</icon-cell>
<div class="l2" style="margin-left:7px"><fit-text w="25">32°C</fit-text><fit-text class="hz" w="26">Haze</fit-text></div>
<icon-cell w="23" m="607">${svg(23, 23, '<defs><linearGradient id="b" x2="1" y2="1"><stop stop-color="#7fe3fb"/><stop offset="1" stop-color="#0a97f4"/></linearGradient></defs><path d="M0 0h11v11H0zM12 0h11v11H12zM0 12h11v11H0zM12 12h11v11H12z" fill="url(#b)"/>')}</icon-cell>
<div class="pill"><icon-cell w="15" m="11">${svg(15, 16, '<circle cx="6.500" cy="6.500" r="5.300" stroke="#eee" stroke-width="1.800"/><path d="M10.300 10.500l4 4.500" stroke="#eee" stroke-width="1.800"/>')}</icon-cell><fit-text w="41" m="10">Search</fit-text>
<icon-cell w="44" m="91">${svg(44, 28, '<path d="M0 22q21-3 44 0-6 6-22 6T0 22z" fill="#b9770e"/><path d="M10 14h13l-2 11h-9z" fill="#8d6fd0"/><path d="M9 13.500h15v3H9z" fill="#a68be4"/><path d="M5 14q3-5 9-1M16 13q5-4 9-2" stroke="#5fae3c" stroke-width="3"/><g fill="#ef5f8c"><circle cx="10" cy="8" r="4"/><circle cx="20" cy="7" r="4.500"/><circle cx="15" cy="4" r="4"/><circle cx="15.500" cy="11" r="4"/><circle cx="11" cy="4.500" r="3"/></g><path d="M11 6q4-4 8 0-1 5-5 3" stroke="#ffb0c5" stroke-width="1.500"/><path d="M40 2l-3.500 7" stroke="#3aa5ea" stroke-width="3.500"/><path d="M36.500 9l-2 4" stroke="#ddd" stroke-width="1.500"/><path d="M31 12l6 3-4 6-5 1z" fill="#d4d7da"/>')}</icon-cell></div>
<icon-cell w="24" m="12">${svg(24, 24, '<rect x="6" y="1" width="18" height="17" fill="#f4f4f4"/><rect y="7" width="17" height="16" fill="#6a6a6a"/><rect x="6" y="7" width="11" height="11" fill="#b4b4b4"/>')}</icon-cell>
<icon-cell w="23" m="20">${svg(23, 24, '<defs><linearGradient id="c" x2="1" y2="1"><stop stop-color="#8f5bd0"/><stop offset="1" stop-color="#4b57c8"/></linearGradient></defs><path d="M1 23V11.500A11 11.300 0 1 1 12 23z" fill="url(#c)"/><rect x="5" y="7.500" width="9.500" height="9.500" rx="1.500" fill="#fff"/><path d="M15 11l3.500-3v8.500L15 13.500z" fill="#fff"/>')}</icon-cell>
<icon-cell w="24" m="21">${svg(24, 23, '<path d="M0 2q0-2 2-2h6l3 3H22v6H0z" fill="#e09c0a"/><path d="M0 6h9l2-2h11q2 0 2 2v15q0 1.500-2 1.500H2Q0 22.500 0 21z" fill="#ffcf48"/><path d="M4 22.500V17q0-2 2-2h11.500q2 0 2 2v5.500z" fill="#1681cc"/><path d="M8 19.500h7" stroke="#0f5da5" stroke-width="1.500"/>')}</icon-cell>
<icon-cell w="24" m="20">${svg(24, 24, '<defs><linearGradient id="d" x2="1"><stop stop-color="#1d9be0"/><stop offset="1" stop-color="#56d86c"/></linearGradient></defs><circle cx="12" cy="12" r="11.800" fill="#0f6cbd"/><path d="M.5 10Q2 0 12.500.2 23.500 1 23.800 10.500q-.8 5-5.800 5.300-5 0-5-2 2-3-.500-6Q7 3.500.5 10z" fill="url(#d)"/><path d="M8.500 12q-2.500 7 4 10.500 5 1.500 9.500-4-5 2-8.500-1-2.500-2.500-.5-4.500-2-3-4.500-1z" fill="#0b3f86"/><path d="M13.500 13.500q0 2.800 4.500 2.500l5-2-1.500 4.500q-5 2-8-1-1.500-2 0-4z" fill="#2d2814"/>')}</icon-cell>
<icon-cell w="23" m="20">${svg(23, 24, '<path d="M6 7V3q0-2 2-2h7q2 0 2 2v4" stroke="#29a9f0" stroke-width="1.800"/><path d="M0 6h23v15q0 3-3 3H3q-3 0-3-3z" fill="#f5f5f5"/><path d="M7 10h4.200v4.200H7z" fill="#f25022"/><path d="M12 10h4.200v4.200H12z" fill="#7fba00"/><path d="M7 15h4.200v4.200H7z" fill="#00a4ef"/><path d="M12 15h4.200v4.200H12z" fill="#ffb900"/>')}</icon-cell>
<div class="cur">${svg(24, 24, '<circle cx="12" cy="12" r="12" fill="#fbc116"/><path d="M1.600 6A12 12 0 0 1 22.400 6H12L7 15z" fill="#e33b2e"/><path d="M1.600 6A12 12 0 0 0 11 24l6-9H7z" fill="#27a04a"/><circle cx="12" cy="12" r="6" fill="#fff"/><circle cx="12" cy="12" r="4.700" fill="#2b7de9"/>')}<b></b></div>
<div class="set">${svg(24, 24, '<path d="M9.500 1h5l1 3 3 1.700 3-.7 2.500 4.300-2.200 2.300v1l2.200 2.300-2.500 4.300-3-.8-3 1.800-1 3h-5l-1-3-3-1.800-3 .8L0 14.900l2.200-2.300v-1L0 9.300 2.500 5l3 .7L8.500 4z" fill="#7d868f"/><circle cx="12" cy="12" r="6" fill="#e8edf2"/><circle cx="12" cy="12" r="4.500" fill="#0f63b8"/>')}<b></b></div>
<icon-cell w="12" m="413">${svg(12, 7, '<path d="M1 6l5-5 5 5" stroke="#fff" stroke-width="1.500"/>')}</icon-cell>
<icon-cell w="16" m="18">${svg(16, 11, '<circle cx="7.500" cy="4.500" r="4.200" fill="#a79994"/><path d="M3.500 10.500Q0 10.500.3 8 .6 5.500 3.500 5.700 5 3.800 8 5l3 1q4.500-.5 4.800 2.500 0 2-2.300 2z" fill="#fff"/>')}</icon-cell>
<div class="l2" style="margin-left:18px;align-items:center"><fit-text w="23">ENG</fit-text><fit-text w="11">IN</fit-text></div>
<icon-cell w="17" m="19">${svg(17, 17, '<path d="M10.500 1.500h-9.500v11h14V8M4 16h9M6 13v3M10.500 13v3" stroke="#fff" stroke-width="1.200"/><rect x="11.800" y=".8" width="4" height="5" stroke="#fff" stroke-width="1.200"/><path d="M13.800 6v6" stroke="#fff"/>')}</icon-cell>
<icon-cell w="17" m="7">${svg(17, 14, '<path d="M.6 4.700h2.600L7 1.300v11.400L3.200 9.300H.6z" stroke="#fff" stroke-width="1.100"/><path d="M9 4.500q1.700 2.500 0 5M11.200 2.700q3.200 4.300 0 8.600M13.400 1q4.600 6 0 12" stroke="#fff" stroke-width="1.100"/>')}</icon-cell>
<div class="l2 e" style="margin-left:16px"><fit-text w="29">23:42</fit-text><fit-text w="62">15-04-2024</fit-text></div>
<icon-cell w="14" m="8">${svg(14, 15, '<path d="M0 12q2-2 2-6 .5-6 5-6t5 6q0 4 2 6z" fill="#edb7f0"/><path d="M4.500 13h5q-.5 2-2.500 2t-2.500-2z" fill="#edb7f0"/>')}</icon-cell>`);

define('desktop-screen', `<style>
:host{display:block;width:1920px;height:1080px;overflow:hidden}
.v{display:flex;height:945px}.p{width:1903px}
</style>
<browser-tabs></browser-tabs><browser-toolbar></browser-toolbar>
<div class="v"><div class="p"><site-header></site-header><site-bar></site-bar><contact-section></contact-section><site-footer></site-footer></div><page-scrollbar></page-scrollbar></div>
<task-bar></task-bar>`);
</script>
</body>
</html>
